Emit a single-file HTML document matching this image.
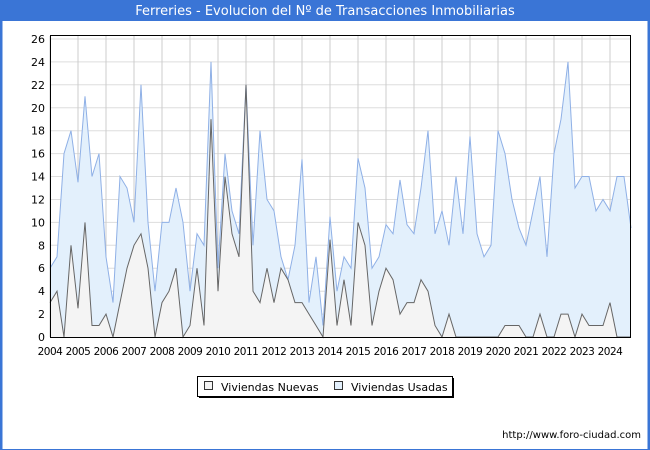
<!DOCTYPE html>
<html><head><meta charset="utf-8"><style>
body{margin:0;width:650px;height:450px;background:#fff;font-family:"Liberation Sans","DejaVu Sans",sans-serif;overflow:hidden}
</style></head><body>
<svg id="s" width="650" height="450" xmlns="http://www.w3.org/2000/svg" style="position:absolute;left:0;top:0">
<rect x="0" y="0" width="650" height="450" fill="#fff"/>
<rect x="0" y="0" width="650" height="21" fill="#3a75d6"/>
<rect x="0.5" y="0.5" width="649" height="449" fill="none" stroke="#3a75d6"/>
<rect x="1" y="20" width="1.5" height="429" fill="#3a75d6"/>
<rect x="647.5" y="20" width="1.5" height="429" fill="#3a75d6"/>
<text x="325" y="15" text-anchor="middle" font-size="13" fill="#fff" font-family="DejaVu Sans, sans-serif">Ferreries - Evolucion del Nº de Transacciones Inmobiliarias</text>
<g id="g"></g>
<rect x="50.5" y="35.5" width="580" height="302" fill="none" stroke="#000"/>
<rect x="197.5" y="376.5" width="255" height="20" fill="#fff" stroke="#000"/>
<line x1="453.5" y1="378" x2="453.5" y2="398" stroke="#000" stroke-width="1"/>
<line x1="199" y1="397.5" x2="453" y2="397.5" stroke="#000"/>
<rect x="204.5" y="381.5" width="8" height="8" fill="#f4f4f4" stroke="#333"/>
<text x="221" y="391" font-size="11" font-family="DejaVu Sans, sans-serif">Viviendas Nuevas</text>
<rect x="334.5" y="381.5" width="8" height="8" fill="#e3f0fc" stroke="#333"/>
<text x="351" y="391" font-size="11" font-family="DejaVu Sans, sans-serif">Viviendas Usadas</text>
<text x="641" y="438" text-anchor="end" font-size="10" font-family="DejaVu Sans, sans-serif">http://www.foro-ciudad.com</text>
</svg>
<script>
var U=[6,7,16,18,13.5,21,14,16,7,3,14,13,10,22,10,4,10,10,13,10,4,9,8,24,6,16,11,9,22,8,18,12,11,7,5,8,15.5,3,7,1,10.5,4,7,6,15.6,13,6,7,9.8,9,13.7,9.8,9,13,18,9,11,8,14,9,17.5,9,7,8,18,16,12,9.5,8,11,14,7,16,19,24,13,14,14,11,12,11,14,14,9.5];
var N=[3,4,0,8,2.5,10,1,1,2,0,3,6,8,9,6,0,3,4,6,0,1,6,1,19,4,14,9,7,22,4,3,6,3,6,5,3,3,2,1,0,8.5,1,5,1,10,8,1,4,6,5,2,3,3,5,4,1,0,2,0,0,0,0,0,0,0,1,1,1,0,0,2,0,0,2,2,0,2,1,1,1,3,0,0,0];
var k=298/26,g='',i;
function X(i){return 50+i*7}function Y(v){return 337-v*k}
for(i=0;i<=26;i+=2){var y=Y(i).toFixed(1);g+='<line x1="51" x2="630" y1="'+y+'" y2="'+y+'" stroke="#ddd"/>';g+='<text x="45" y="'+(+y+4)+'" text-anchor="end" font-size="11" font-family="DejaVu Sans, sans-serif">'+i+'</text>';}
for(i=0;i<=20;i++){var x=50+i*28;g+='<line x1="'+x+'" x2="'+x+'" y1="36" y2="337" stroke="#ccc"/>';g+='<text x="'+x+'" y="355" text-anchor="middle" font-size="10.5" letter-spacing="-0.5" font-family="DejaVu Sans, sans-serif">'+(2004+i)+'</text>';}
function pts(a){var p='';for(var i=0;i<a.length;i++)p+=X(i).toFixed(1)+','+Y(a[i]).toFixed(1)+' ';return p}
var pu=pts(U),pn=pts(N);
g+='<polygon points="50,337 '+pu+'631,337" fill="#e3f0fc"/>';
g+='<polygon points="50,337 '+pn+'631,337" fill="#f4f4f4"/>';
g+='<polyline points="'+pu+'" fill="none" stroke="#8fb0e6" stroke-width="1"/>';
g+='<polyline points="'+pn+'" fill="none" stroke="#666" stroke-width="1"/>';
document.getElementById('g').innerHTML=g;
</script>
</body></html>
